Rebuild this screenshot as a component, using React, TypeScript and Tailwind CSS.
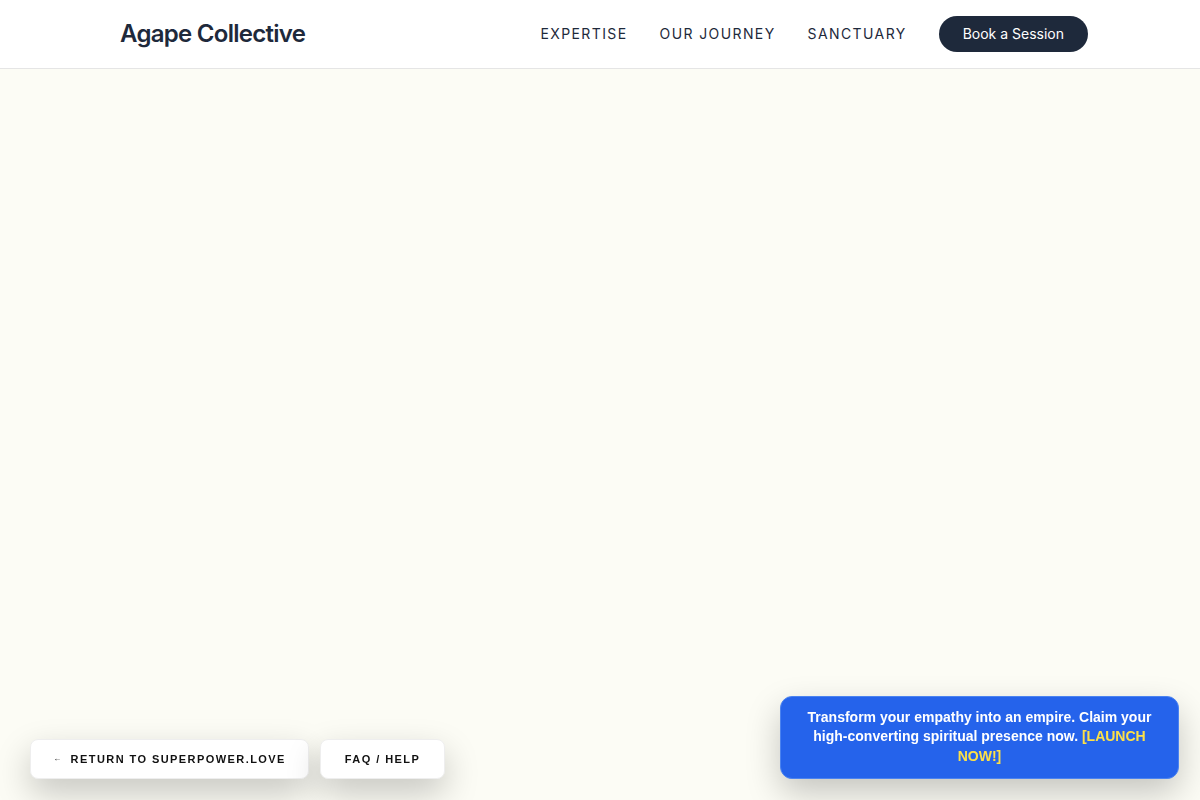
import React from 'react';

const navLinks = ['EXPERTISE', 'OUR JOURNEY', 'SANCTUARY'];

export default function App() {
  return (
    <div className="min-h-screen w-full bg-[#fcfcf5] font-['Inter',sans-serif]">
      {/* Top bar */}
      <header className="h-[69px] bg-white border-b border-[#e5e5e5]">
        <div className="flex h-[68px] items-center justify-between pl-[120px] pr-[112px]">
          <div className="text-[24px] font-semibold tracking-[-0.03em] text-[#1e293b]">Agape Collective</div>
          <nav className="flex items-center gap-8">
            {navLinks.map((link) => (
              <a key={link} className="-mt-[2px] text-[14px] tracking-[0.1em] text-[#1e293b]">
                {link}
              </a>
            ))}
            <button className="h-9 rounded-full bg-[#1e293b] px-6 pb-[2px] text-[14px] text-white">
              Book a Session
            </button>
          </nav>
        </div>
      </header>

      <main className="h-[731px]" />

      {/* Floating footer links */}
      <div className="fixed bottom-[21px] left-[30px] flex gap-[11px] font-['Liberation_Sans',sans-serif]">
        <a className="flex h-10 w-[279px] items-center justify-center rounded-lg border border-[#eeeeee] bg-white text-[11px] font-bold tracking-[0.13em] text-[#111] shadow-[0_14px_34px_rgba(0,0,0,0.22)]">
          <span className="mr-2 text-[8px] font-normal">←</span>RETURN TO SUPERPOWER.LOVE
        </a>
        <a className="flex h-10 w-[125px] items-center justify-center rounded-lg border border-[#eeeeee] bg-white text-[11px] font-bold tracking-[0.13em] text-[#111] shadow-[0_14px_34px_rgba(0,0,0,0.22)]">
          FAQ / HELP
        </a>
      </div>

      {/* Promo banner */}
      <div className="fixed bottom-[21px] right-[21px] w-[399px] rounded-xl border border-[#4b83f0] bg-[#2563eb] px-5 pb-[12px] pt-[11px] text-center font-['Liberation_Sans',sans-serif] text-[14px] font-bold leading-[19.5px] text-white shadow-[0_14px_34px_rgba(0,0,0,0.22)]">
        Transform your empathy into an empire. Claim your high-converting spiritual presence now.{' '}
        <span className="text-[#fde047]">[LAUNCH NOW!]</span>
      </div>
    </div>
  );
}
